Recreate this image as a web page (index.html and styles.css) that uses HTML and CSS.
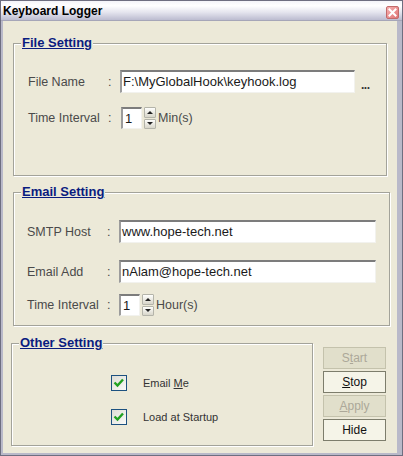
FILE: index.html
```html
<!DOCTYPE html>
<html>
<head>
<meta charset="utf-8">
<link rel="stylesheet" href="styles.css">
</head>
<body>
<div class="window">
  <div class="titlebar">
    <span class="title">Keyboard Logger</span>
    <span class="close"><svg width="11" height="11" viewBox="0 0 11 11"><path d="M2.5 2.5 L8.5 8.5 M8.5 2.5 L2.5 8.5" stroke="#fff" stroke-width="2" stroke-linecap="square"/></svg></span>
  </div>
  <div class="client">
    <div class="group g-file">
      <span class="legend">File Setting</span>
      <div class="row f-r1">
        <span class="lbl">File Name</span><span class="colon">:</span>
        <div class="field w-file">F:\MyGlobalHook\keyhook.log</div>
        <span class="browse">...</span>
      </div>
      <div class="row f-r2">
        <span class="lbl">Time Interval</span><span class="colon">:</span>
        <div class="spin s-file">
          <div class="field num">1</div>
          <div class="spinbtns"><span class="sb up"><i class="arr-up"></i></span><span class="sb down"><i class="arr-down"></i></span></div>
        </div>
        <span class="unit">Min(s)</span>
      </div>
    </div>

    <div class="group g-mail">
      <span class="legend">Email Setting</span>
      <div class="row m-r1">
        <span class="lbl">SMTP Host</span><span class="colon">:</span>
        <div class="field w-mail">www.hope-tech.net</div>
      </div>
      <div class="row m-r2">
        <span class="lbl">Email Add</span><span class="colon">:</span>
        <div class="field w-mail">nAlam@hope-tech.net</div>
      </div>
      <div class="row m-r3">
        <span class="lbl">Time Interval</span><span class="colon">:</span>
        <div class="spin">
          <div class="field num">1</div>
          <div class="spinbtns"><span class="sb up"><i class="arr-up"></i></span><span class="sb down"><i class="arr-down"></i></span></div>
        </div>
        <span class="unit">Hour(s)</span>
      </div>
    </div>

    <div class="bottom">
      <div class="group g-other">
        <span class="legend">Other Setting</span>
        <div class="check c1">
          <svg class="box" width="16" height="16" viewBox="0 0 16 16">
            <defs><linearGradient id="cg" x1="0" y1="0" x2="1" y2="1"><stop offset="0" stop-color="#dcdcd4"/><stop offset="1" stop-color="#fbfbf9"/></linearGradient></defs>
            <rect x="0.5" y="0.5" width="15" height="15" fill="url(#cg)" stroke="#1c5180"/>
            <path d="M3.5 7.5 L6.5 10.5 L12 4.5" fill="none" stroke="#21a121" stroke-width="2.4"/>
          </svg>
          <span class="clbl">Email <u>M</u>e</span>
        </div>
        <div class="check c2">
          <svg class="box" width="16" height="16" viewBox="0 0 16 16">
            <rect x="0.5" y="0.5" width="15" height="15" fill="url(#cg)" stroke="#1c5180"/>
            <path d="M3.5 7.5 L6.5 10.5 L12 4.5" fill="none" stroke="#21a121" stroke-width="2.4"/>
          </svg>
          <span class="clbl">Load at Startup</span>
        </div>
      </div>
      <div class="buttons">
        <div class="btn disabled">S<u>t</u>art</div>
        <div class="btn"><u>S</u>top</div>
        <div class="btn disabled"><u>A</u>pply</div>
        <div class="btn">Hide</div>
      </div>
    </div>
  </div>
</div>
</body>
</html>
```

FILE: styles.css
```css
* { box-sizing: border-box; }
html, body { margin: 0; padding: 0; background: #ece9d8; }
body { font-family: "Liberation Sans", Arial, sans-serif; }

.window {
  width: 403px;
  height: 456px;
  border: 1px solid #6e6e80;
  background: #b9b9c9;
  padding: 0 5px 2px 2px;
  display: flex;
  flex-direction: column;
  overflow: hidden;
}

.titlebar {
  height: 20px;
  margin: 0 -5px 0 -2px;
  padding: 0 3px 0 2px;
  display: flex;
  align-items: center;
  justify-content: space-between;
  background: linear-gradient(#f4f4f8 0%, #ffffff 25%, #e4e4ee 60%, #bcbcd0 100%);
  border-bottom: 1px solid #a6a6b8;
}
.title {
  font-weight: bold;
  font-size: 12px;
  color: #000;
  margin-top: 1px;
}
.close {
  width: 13px;
  height: 13px;
  margin-top: 4px;
  border: 1px solid #c26a6a;
  border-radius: 2px;
  background: linear-gradient(135deg, #f5b0b0, #e07474);
  display: flex;
  align-items: center;
  justify-content: center;
}

.client {
  flex: 1;
  background: #ece9d8;
  padding: 22px 0 0 10px;
  display: flex;
  flex-direction: column;
  align-items: flex-start;
}

.group {
  position: relative;
  border: 1px solid #a3a39a;
  box-shadow: inset 1px 1px 0 #ffffff, 1px 1px 0 #ffffff;
}
.legend {
  position: absolute;
  top: -8px;
  left: 7px;
  padding: 0 1px;
  line-height: 14px;
  font-size: 13px;
  font-weight: bold;
  color: #0a1c80;
  text-decoration: underline;
  background: #ece9d8;
}

.g-file { width: 374px; height: 133px; padding-left: 14px; }
.g-mail { width: 377px; height: 134px; margin-top: 16px; padding-left: 13px; }

.row { display: flex; align-items: center; }
.f-r1 { margin-top: 26px; }
.f-r2 { margin-top: 14px; }
.m-r1 { margin-top: 27px; }
.m-r2 { margin-top: 17px; }
.m-r3 { margin-top: 11px; }

.lbl {
  width: 80px;
  font-size: 12.5px;
  color: #4a4a4a;
  white-space: nowrap;
}
.colon {
  width: 12px;
  font-size: 12.5px;
  color: #4a4a4a;
}
.unit {
  margin-left: 2px;
  font-size: 12.5px;
  color: #4a4a4a;
}

.field {
  height: 23px;
  background: #fff;
  border-top: 2px solid #7c7c7c;
  border-left: 2px solid #9c9c9c;
  border-right: 1px solid #f2f2ee;
  border-bottom: 1px solid #f2f2ee;
  font-size: 13px;
  color: #1a1a1a;
  padding-left: 1px;
  line-height: 19px;
  white-space: nowrap;
  overflow: hidden;
}
.w-file { width: 235px; }
.w-mail { width: 257px; }

.browse {
  margin-left: 6px;
  margin-top: 6px;
  font-size: 12px;
  font-weight: bold;
  color: #333;
  letter-spacing: -0.5px;
}

.spin { display: flex; align-items: stretch; height: 22px; }
.s-file { margin-left: 1px; }
.spin .field.num { width: 21px; height: 22px; padding-left: 2px; line-height: 19px; }
.spinbtns {
  width: 12px;
  margin-left: 2px;
  display: flex;
  flex-direction: column;
  gap: 1px;
}
.sb {
  flex: 1;
  border: 1px solid #b4b4aa;
  border-radius: 1px;
  background: linear-gradient(#fefefc, #d8d6ca);
  display: flex;
  align-items: center;
  justify-content: center;
}
.arr-up {
  width: 0; height: 0;
  border-left: 3px solid transparent;
  border-right: 3px solid transparent;
  border-bottom: 3px solid #222;
}
.arr-down {
  width: 0; height: 0;
  border-left: 3px solid transparent;
  border-right: 3px solid transparent;
  border-top: 3px solid #222;
}

.bottom {
  display: flex;
  align-items: flex-start;
  margin-top: 17px;
  margin-left: -2px;
}
.g-other {
  width: 302px;
  height: 103px;
  padding: 31px 0 0 99px;
}
.check { display: flex; align-items: center; height: 16px; }
.check.c2 { margin-top: 18px; }
.box { display: block; }
.clbl {
  margin-left: 16px;
  font-size: 11px;
  color: #333;
}

.buttons {
  margin-left: 10px;
  margin-top: 4px;
  display: flex;
  flex-direction: column;
  gap: 2px;
}
.btn {
  width: 63px;
  height: 22px;
  border: 1px solid #7d7d6c;
  background: #f5f4e8;
  font-size: 12px;
  color: #111;
  display: flex;
  align-items: center;
  justify-content: center;
}
.btn.disabled {
  border-color: #c4c2ac;
  background: #e1dfcb;
  color: #aca899;
}
```
